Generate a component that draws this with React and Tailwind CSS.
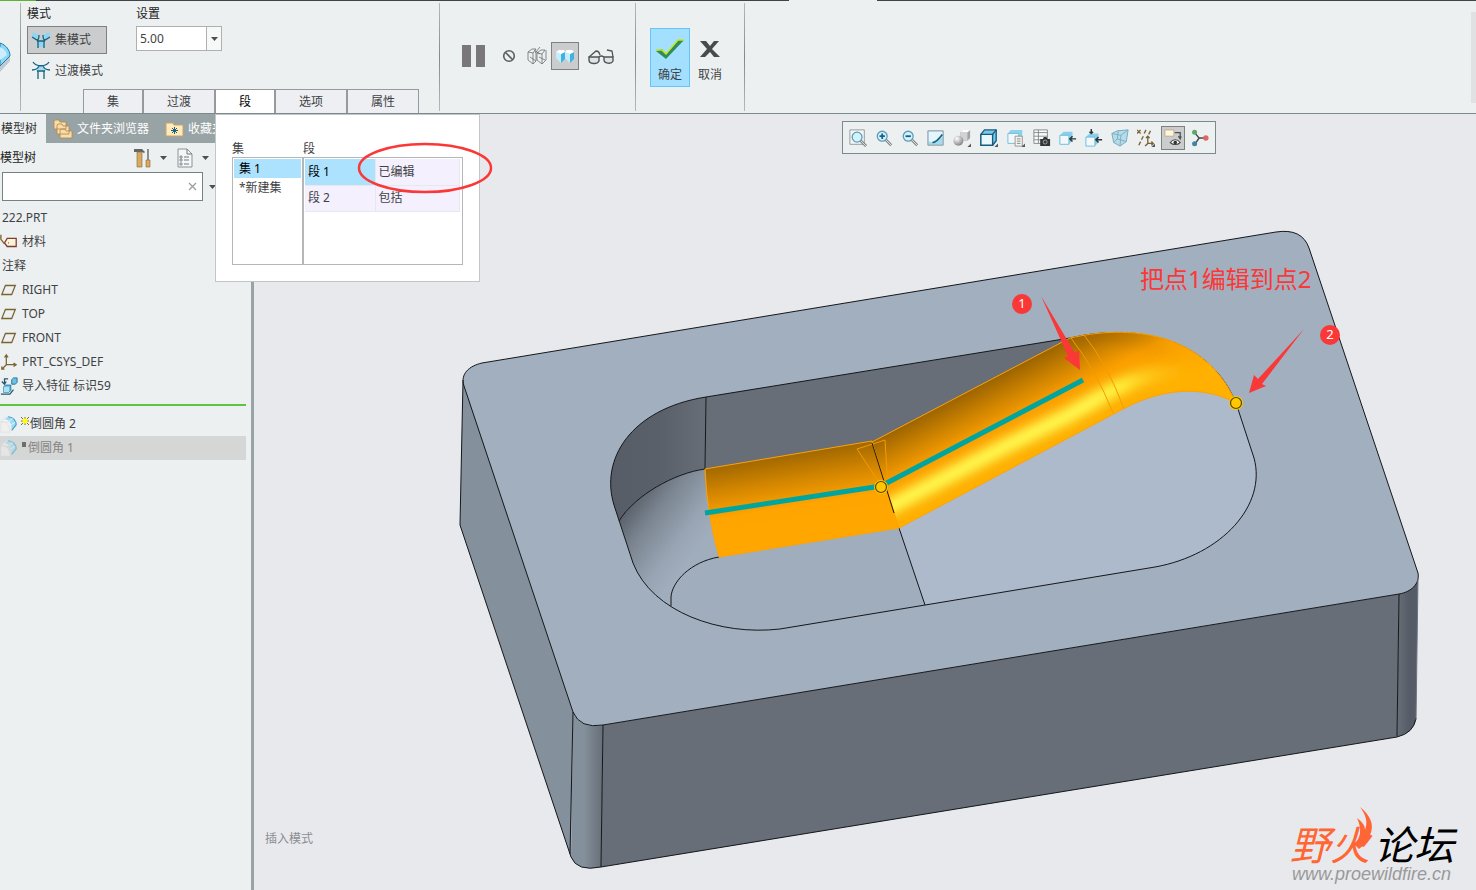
import React from "react";

const Icon = ({ children, size = 20, className = "" }) => (
  <svg width={size} height={size} viewBox="0 0 20 20" fill="none" className={`shrink-0 ${className}`} aria-hidden="true">
    {children}
  </svg>
);

const Caret = () => (
  <svg width="7" height="4" viewBox="0 0 7 4" className="shrink-0" aria-hidden="true">
    <path d="M0 0h7L3.5 4z" fill="#4d5050" />
  </svg>
);

const Divider = () => (
  <div className="my-0.5 w-px shrink-0 bg-gradient-to-b from-[#b4b9ba] via-[#85898b] to-[#b4b9ba]"></div>
);

const SetModeIcon = () => (
  <Icon>
    <path d="M2 2l6 3-1 5-6-3z M18 2l-6 3 1 5 6-3z M7 11h6v6H7z" fill="#8fd6f3" />
    <path d="M1 7l5 3c2 0 2-3 2-5M19 7l-5 3c-2 0-2-3-2-5M6 11h8M7 11v7M13 11v7" stroke="#17617f" strokeWidth="1.3" />
  </Icon>
);

const TransitionIcon = () => (
  <Icon>
    <path d="M7 5h6l2 5H5z" fill="#a5dcf3" />
    <path d="M2 1c3 5 13 5 16 0M1 9c5 0 6-2 7-4M19 9c-5 0-6-2-7-4M6 10h8M7 10v8M13 10v8" stroke="#17617f" strokeWidth="1.3" />
  </Icon>
);

const tabs = [
  { label: "集", width: "w-[60px]" },
  { label: "过渡", width: "w-[72px]" },
  { label: "段", width: "w-[60px]", active: true },
  { label: "选项", width: "w-[72px]" },
  { label: "属性", width: "w-[72px]" },
];

const SegmentPanel = () => (
  <div className="absolute left-[132px] top-full mt-px h-[168px] w-[265px] border border-[#c2c6c9] bg-white pl-4 pt-6">
    <div className="flex h-[18px] items-end leading-4">
      <span className="w-[71px]">集</span>
      <span>段</span>
    </div>
    <div className="flex h-[108px] w-[231px] border border-[#b4b6b8]">
      <ul className="w-[71px] border-r-2 border-[#b4b6b8] p-px">
        <li className="flex h-[19px] items-center bg-[#ade2ff] pl-[5px] text-black">集 1</li>
        <li className="flex h-[19px] items-center pl-[5px]">*新建集</li>
      </ul>
      <div className="p-px">
        <table className="w-[155px] border-collapse bg-[#f4f0fe]">
          <tbody>
            <tr className="h-[26px] border-b border-[#e6e8ee]">
              <td className="w-[70px] bg-[#ade2ff] pl-[3px] text-black">段 1</td>
              <td className="border-x border-[#e6e8ee] pl-[3px]">已编辑</td>
            </tr>
            <tr className="h-[26px] border-b border-[#e6e8ee]">
              <td className="pl-[3px]">段 2</td>
              <td className="border-x border-[#e6e8ee] pl-[3px]">包括</td>
            </tr>
          </tbody>
        </table>
      </div>
    </div>
    {/* hand drawn mark around the edited cell */}
    <svg className="pointer-events-none absolute left-[140px] top-[26px]" width="138" height="54" viewBox="0 0 138 54" fill="none">
      <ellipse cx="69" cy="27" rx="66" ry="24" stroke="#fb3838" strokeWidth="2.5" />
    </svg>
  </div>
);

const Ribbon = () => (
  <header className="relative z-10 border-b border-[#7b8b8b] bg-[#ecf0f1]">
    <div className="flex h-px">
      <div className="w-9 bg-[#5cb336]"></div>
      <div className="w-[753px] bg-[#3c4548]"></div>
      <div className="w-[88px]"></div>
      <div className="flex-1 bg-[#3c4548]"></div>
    </div>
    <div className="flex h-28">
      <div className="w-5 shrink-0 pt-10">
        <svg width="12" height="34" viewBox="0 0 12 34">
          <path d="M0 24l10-10v6L0 31z" fill="#c2c6cf" />
          <path d="M0 2c6 2 10 7 10 13L0 25z" fill="#8dd6f5" stroke="#1b84ad" />
          <path d="M0 6c4 2 6 4 7 8l-7 5z" fill="#cceefb" />
        </svg>
      </div>
      <Divider />
      <div className="flex w-[418px] shrink-0 flex-col justify-between">
        <div className="flex pl-1.5 pt-1">
          <div className="flex w-[109px] flex-col items-start">
            <span className="mb-[3px] h-[18px] leading-[18px] text-[#222]">模式</span>
            <button className="flex h-7 w-20 items-center gap-1 border border-[#7f8080] bg-[#cbccce] pl-[3px]">
              <SetModeIcon />
              集模式
            </button>
            <button className="mt-1 flex h-[26px] items-center gap-1 pl-1">
              <TransitionIcon />
              过渡模式
            </button>
          </div>
          <div>
            <label htmlFor="radius" className="mb-[3px] block h-[18px] leading-[18px] text-[#222]">设置</label>
            <div className="flex h-[25px] w-[86px] border border-[#aeb1b2] bg-white">
              <input id="radius" defaultValue="5.00" className="w-[70px] border-r border-[#aeb1b2] pl-[3px] outline-none" />
              <button aria-label="半径列表" className="flex flex-1 items-center justify-center bg-[#f7f8f8]">
                <Caret />
              </button>
            </div>
          </div>
        </div>
        <nav className="relative flex h-6 pl-[62px]">
          {tabs.map((tab) => (
            <button
              key={tab.label}
              className={`border border-b-0 border-[#979a9c] text-center ${tab.width} ${tab.active ? "bg-white text-black" : "bg-[#eeeff2]"}`}
            >
              {tab.label}
            </button>
          ))}
          <div className="absolute left-[62px] top-0">
            <div className="relative h-6">
              <SegmentPanel />
            </div>
          </div>
        </nav>
      </div>
      <Divider />
      <div className="flex h-[110px] w-[195px] shrink-0 items-center pl-[22px]">
        <button aria-label="暂停" className="flex w-[23px] justify-between">
          <span className="h-[22px] w-[9px] bg-[#797779]"></span>
          <span className="h-[22px] w-[9px] bg-[#797779]"></span>
        </button>
        <button aria-label="无预览" className="ml-3.5">
          <Icon>
            <circle cx="10" cy="10" r="5.3" stroke="#5c5e60" strokeWidth="1.6" />
            <path d="M6.5 6.5l7 7" stroke="#5c5e60" strokeWidth="1.6" />
          </Icon>
        </button>
        <button aria-label="分离预览" className="ml-2">
          <Icon>
            <path d="M1 6l4-3h4l-3 4zM1 6v8l5 4V7M6 18l3-3V5M9 15l-6-4M10 7l4-3h4l-3 4zM10 7v7l5 4V8M15 18l4-4V4M18 14l-6-3M7 4l6 4M13 1l-5 6" stroke="#6c7072" strokeWidth=".8" />
          </Icon>
        </button>
        <button aria-label="附加预览" className="ml-1 flex size-7 items-center justify-center border border-[#7f8080] bg-[#cbccce]">
          <Icon>
            <path d="M1 6l5 2v9l-5-5zM10 6l5 2v9l-5-5z" fill="#c5edfb" />
            <path d="M6 8l4-2v7l-4 4zM15 8l4-2v7l-4 4z" fill="#3fb1e4" />
            <path d="M1 6l3-2h5l1 2-4 2zM10 6l2-2h5l2 2-4 2z" fill="#fff" />
          </Icon>
        </button>
        <button aria-label="校验" className="ml-2">
          <svg width="28" height="20" viewBox="0 0 28 20" fill="none">
            <path d="M2 11h10v4c-2 4-10 3-10-1zM17 11h9v4c-2 4-9 2-9-1z" fill="#dde3e6" stroke="#505456" strokeWidth="1.4" />
            <path d="M2 11l7-6q3 0 4 4M12 11q2-2 5 0M26 11l-1-6-5-1" stroke="#505456" strokeWidth="1.3" />
          </svg>
        </button>
      </div>
      <Divider />
      <div className="flex w-[108px] shrink-0 items-center pl-3.5">
        <button className="flex h-[59px] w-10 flex-col items-center border border-[#65c5f8] bg-[#a3dfff] pt-[7px]">
          <svg width="30" height="26" viewBox="0 0 30 26">
            <path d="M1 15l6-2 4 5L23 4l6 0-18 19z" fill="#2f8d5b" />
            <path d="M1 14h6l4 4L23 4h6" fill="none" stroke="#c8e718" strokeWidth="1.5" />
          </svg>
          <span className="mt-1.5 leading-[14px]">确定</span>
        </button>
        <button className="flex h-[59px] w-10 flex-col items-center pt-2">
          <svg width="22" height="26" viewBox="0 0 22 26">
            <path d="M1 5h6l4 5 4-5h5l-7 8 8 8h-6l-4-5-5 5H1l7-8z" fill="#494a4c" />
          </svg>
          <span className="mt-1.5 leading-[14px]">取消</span>
        </button>
      </div>
      <Divider />
      <div className="ml-auto mb-2.5 mt-[11px] w-[5px] bg-[#e0e1e3]"></div>
    </div>
  </header>
);

const PlaneIcon = () => (
  <Icon size={18}>
    <path d="M6 5h11l-4 10H2z" stroke="#7c6332" strokeWidth="1.4" />
  </Icon>
);

const RoundIcon = ({ dim }) => (
  <Icon size={18} className={dim ? "opacity-60" : ""}>
    <path d="M1 7l6-5 6 2-5 4z" fill="#f4f4f4" stroke="#d5d5d5" strokeWidth=".6" />
    <path d="M1 8c6-1 10 3 10 11H1z" fill="#f2f0ef" stroke="#dadada" strokeWidth=".6" />
    <path d="M5 5c6 0 8 5 8 12l5-5C18 7 14 2 9 2z" fill="#9fdaf2" />
    <path d="M9 2c5 0 9 4 9 9l-5 6" stroke="#3d9fc6" strokeWidth="1.2" />
    <path d="M10 7l4-3M12 11l5-3" stroke="#e5f8ff" />
  </Icon>
);

const tree = [
  { label: "222.PRT" },
  {
    label: "材料",
    icon: (
      <Icon size={18}>
        <path d="M8 6h10v9H8l-3-4z" fill="#fff3d5" stroke="#7e3a35" strokeWidth="1.4" />
        <path d="M1 2v5l4 5M9 11h1" stroke="#806128" strokeWidth="1.5" />
      </Icon>
    ),
  },
  { label: "注释" },
  { label: "RIGHT", icon: <PlaneIcon /> },
  { label: "TOP", icon: <PlaneIcon /> },
  { label: "FRONT", icon: <PlaneIcon /> },
  {
    label: "PRT_CSYS_DEF",
    icon: (
      <Icon size={18}>
        <path d="M7 2v11h11M7 13l-5 5M5 5l2-3 2 3M15 11l3 2-3 2M2 15v3h3" stroke="#7c6332" strokeWidth="1.4" />
      </Icon>
    ),
  },
  {
    label: "导入特征 标识59",
    icon: (
      <Icon size={18}>
        <path d="M13 3l2-2h4v5l-2 2h-4zM4 11l2-2h6v6l-2 2H4z" fill="#6cc2e3" stroke="#1d7095" />
        <path d="M4 11h6v6H4z" fill="#a9e2f6" />
        <path d="M1 19h10l4-5M9 2H5v5M2 5l3 3 2-3" stroke="#27566c" strokeWidth="1.4" />
      </Icon>
    ),
  },
];

const Sidebar = () => (
  <aside className="w-[254px] shrink-0 border-r-[3px] border-[#98a3a5] bg-[#ecf0f1]">
    <div className="flex h-[29px] overflow-hidden whitespace-nowrap bg-[#98a3a5] text-white">
      <button className="w-[46px] bg-[#ecf0f1] pl-px text-left text-[#333]">模型树</button>
      <button className="flex w-[114px] items-center gap-1 pl-[7px]">
        <Icon>
          <path d="M1 2l1-1h4l1 2h6v7H1zM4 6l1-1h4l1 2h6v8H4zM7 11l1-1h4l1 2h6v7H7z" fill="#f8ddaa" stroke="#b38746" strokeWidth=".8" />
        </Icon>
        文件夹浏览器
      </button>
      <button className="flex items-center gap-1 pl-1">
        <Icon>
          <path d="M2 4h7l1 2h9v11H2z" fill="#ffe9bd" stroke="#c8a464" />
          <path d="M10.5 8v7M7 11.5h7M8 9l5 5M13 9l-5 5" stroke="#1a5f7d" />
        </Icon>
        收藏夹
      </button>
    </div>
    <div className="flex h-[29px] items-center">
      <span className="w-[132px] text-[#222]">模型树</span>
      <button aria-label="设置" className="flex items-center gap-2">
        <Icon>
          <path d="M2 1h8l3 3-1 1-2-1H2z" fill="#62666b" />
          <path d="M5 4h5v15H5z" fill="#d7a961" stroke="#8b6837" strokeWidth=".6" />
          <path d="M14 12h4v7h-4z" fill="#d7a961" stroke="#8b6837" strokeWidth=".6" />
          <path d="M16 1v11" stroke="#73777c" strokeWidth="1.6" />
        </Icon>
        <Caret />
      </button>
      <button aria-label="显示" className="ml-2 flex items-center gap-[7px]">
        <Icon>
          <path d="M3 1h9l5 5v13H3z" fill="#f4f6f7" stroke="#8c9296" />
          <path d="M12 1v5h5M9 9h5M9 12h5M9 16h5" stroke="#72787b" />
          <path d="M5 8h2v2H5zM5 11h2v2H5zM5 15h2v2H5z" stroke="#72787b" strokeWidth=".8" />
        </Icon>
        <Caret />
      </button>
    </div>
    <div className="flex items-center gap-1.5 pl-0.5">
      <div className="flex h-[29px] w-[201px] items-center border border-[#748284] bg-white pr-1">
        <input aria-label="搜索" className="min-w-0 flex-1 px-1 outline-none" />
        <button aria-label="清除">
          <svg width="9" height="9" viewBox="0 0 9 9" className="mr-px">
            <path d="M1 1l7 7M8 1L1 8" stroke="#999d9e" strokeWidth="1.3" />
          </svg>
        </button>
      </div>
      <Caret />
    </div>
    <ul className="pt-[5px]">
      {tree.map((item) => (
        <li key={item.label} className={`flex h-6 items-center gap-1 ${item.icon ? "" : "pl-0.5"}`}>
          {item.icon}
          {item.label}
        </li>
      ))}
    </ul>
    <div className="mt-1.5 mr-[5px] h-0.5 bg-[#5fc240]"></div>
    <ul className="mr-[5px] pt-1.5">
      <li className="flex h-6 items-center">
        <RoundIcon />
        <svg width="8" height="8" viewBox="0 0 8 8" className="mb-1.5 ml-[3px] mr-px">
          <path d="M0 0l8 8M8 0L0 8M4 0v8M0 4h8" stroke="#77702a" />
          <path d="M2 2h4v4H2z" fill="#ff0" />
          <path d="M4 1v6M1 4h6" stroke="#ff0" />
        </svg>
        倒圆角 2
      </li>
      <li className="flex h-6 items-center bg-[#d5d6d6] text-[#858686]">
        <RoundIcon dim />
        <span className="mb-2 ml-1 mr-0.5 h-[5px] w-1 bg-[#6d6e6e]"></span>
        倒圆角 1
      </li>
    </ul>
  </aside>
);

const Lens = () => (
  <g>
    <path d="M12 12l6 6" stroke="#858a8e" strokeWidth="3" />
    <path d="M12 12l6 6" stroke="#e1e3e4" strokeWidth="1" />
    <circle cx="8" cy="8" r="5.5" fill="#d5f1fb" stroke="#5b9cb6" strokeWidth="1.4" />
  </g>
);

const Corner = () => <path d="M20 16v4h-4z" fill="#55595b" />;

const viewTools = [
  {
    name: "重新调整",
    icon: (
      <>
        <path d="M1 1h16v16H1z" fill="#f5f7f8" stroke="#8d9496" />
        <g transform="translate(1 1)"><Lens /></g>
      </>
    ),
  },
  { name: "放大", icon: <><Lens /><path d="M5 8h6M8 5v6" stroke="#14628a" strokeWidth="2" /></> },
  { name: "缩小", icon: <><Lens /><path d="M5 8h6" stroke="#14628a" strokeWidth="2" /></> },
  {
    name: "重画",
    icon: (
      <>
        <path d="M1 2h17v16H1z" fill="#a4daee" stroke="#899397" />
        <path d="M2 3h15v6L7 15l-5-1z" fill="#e4f6fc" />
        <path d="M6 15c4 0 8-5 11-9" stroke="#185d7c" strokeWidth="1.8" />
      </>
    ),
  },
  {
    name: "渲染选项",
    icon: (
      <>
        <path d="M8 4l3-3h8v9l-3 3H8z" fill="#a3a3a4" />
        <path d="M8 4l3-3h8l-3 3z" fill="#fff" />
        <path d="M8 4h8v9H8z" fill="#d3d3d4" />
        <circle cx="6" cy="13" r="5.5" fill="url(#ball)" />
        <Corner />
      </>
    ),
  },
  {
    name: "显示样式",
    wide: true,
    icon: (
      <>
        <path d="M1 6l4-5h13v12l-4 5H1z" fill="#7cc8e4" stroke="#155d80" strokeWidth="1.5" />
        <path d="M1 6h13v12H1z" fill="#eaf8fd" stroke="#155d80" strokeWidth="1.5" />
        <path d="M14 6l4-5" stroke="#155d80" strokeWidth="1.5" />
        <Corner />
      </>
    ),
  },
  {
    name: "已保存方向",
    wide: true,
    icon: (
      <>
        <path d="M1 5l3-4h13v10l-3 5H1z" fill="#8dd2ed" />
        <path d="M1 5h12v11H1z" fill="#f3f7f9" stroke="#75bdd9" />
        <path d="M9 8h8v11H9z" fill="#f6f4ee" stroke="#8f938f" />
        <path d="M11 11h4M11 13.5h4M11 16h4" stroke="#7e827e" />
        <Corner />
      </>
    ),
  },
  {
    name: "视图管理器",
    icon: (
      <>
        <path d="M1 1h15v15H1z" fill="#fbfbfb" stroke="#7f8486" />
        <path d="M1 4h15M1 8h15M1 12h15M6 1v15" stroke="#7f8486" />
        <path d="M8 11h3l1-2h3l1 2h3v8H8z" fill="#333638" />
        <circle cx="13.5" cy="14.5" r="2.2" stroke="#a6abad" />
      </>
    ),
  },
  {
    name: "透视图",
    icon: (
      <>
        <path d="M1 7l4-4h10v10l-4 4H1z" fill="#8bd0eb" />
        <path d="M1 7h10v10H1z" fill="#f3f8fa" stroke="#62bde0" />
        <path d="M12 11h7M15 8l-3 3 3 3" stroke="#303436" strokeWidth="1.6" />
      </>
    ),
  },
  {
    name: "参考",
    icon: (
      <>
        <path d="M1 9l4-4h10v10l-4 4H1z" fill="#8bd0eb" />
        <path d="M1 9h10v10H1z" fill="#f3f8fa" stroke="#62bde0" />
        <path d="M7 0v5M5 3l2 2 2-2M12 12h7M15 9l-3 3 3 3" stroke="#303436" strokeWidth="1.6" />
      </>
    ),
  },
  {
    name: "剖面",
    icon: (
      <>
        <path d="M1 5l6-3 12-1-2 13-7 5-7-4z" fill="#b5dcea" stroke="#6ca7bd" />
        <path d="M1 5l10 2 8-6M11 7l-1 12M8 2l-1 9-4 4M7 11l10 3" stroke="#7faabd" />
      </>
    ),
  },
  {
    name: "基准显示",
    icon: (
      <>
        <path d="M0 1l4 4M4 1L0 5M10 1L8 5M7 8l-2 4M4 14l-2 4M15 2l-2 4M12 8v8h6M12 16l-3 3M10 10l2-2 2 2M16 14l2 2-2 2" stroke="#7c6332" strokeWidth="1.5" />
        <Corner />
      </>
    ),
  },
  {
    name: "注释显示",
    active: true,
    icon: (
      <>
        <path d="M1 1h10v7H1z" fill="#fff5da" stroke="#b9ab88" />
        <path d="M12 4h6v6M16 8l2 3 1-3" stroke="#4d5052" strokeWidth="1.4" />
        <path d="M7 15c3-4 8-4 11 0-3 3-8 3-11 0z" fill="#fff" stroke="#444" strokeWidth="1.2" />
        <circle cx="12.5" cy="15" r="2" fill="#333" />
      </>
    ),
  },
  {
    name: "旋转中心",
    icon: (
      <>
        <path d="M4 4l5 6-4 6M9 10h7" stroke="#424a4c" strokeWidth="1.6" />
        <circle cx="4" cy="3.5" r="2.8" fill="#5caa64" />
        <circle cx="4" cy="16.5" r="2.8" fill="#4383a4" />
        <circle cx="16.5" cy="10" r="3" fill="#dc6863" />
      </>
    ),
  },
];

const toolWidth = (tool) => {
  if (tool.active) return "mx-0.5 w-6 border border-[#7f8080] bg-[#cbccce]";
  return tool.wide ? "w-[27px]" : "w-[26px]";
};

const ViewToolbar = () => (
  <div className="absolute left-[588px] top-[7px] flex h-[33px] items-center border border-[#7b8b8b] bg-[#ecf0f1] px-0.5">
    {viewTools.map((tool) => (
      <button key={tool.name} aria-label={tool.name} className={`flex h-6 items-center justify-center ${toolWidth(tool)}`}>
        <Icon size={18}>{tool.icon}</Icon>
      </button>
    ))}
  </div>
);

const topFace = "M482 363L1276 232Q1302 228 1309 248L1418 573C1420 584 1411 592 1399 594L603 725Q580 729 573 712L464 386C460 374 469 366 482 363Z";
const pocket = "M706 397L1070 338C1140 322 1210 340 1236 403L1254 458C1267 505 1222 555 1155 567L780 629C720 636 652 612 633 563L614 505C600 460 630 409 706 397Z";
const sweep = "M872 442L1070 338C1140 322 1208 338 1236 403C1205 386 1164 387 1123 409L899 528Z";

const Model = () => (
  <svg viewBox="254 114 1222 776" className="block h-auto w-full" fill="none" role="img" aria-label="222.PRT">
    <defs>
      <radialGradient id="ball" cx=".35" cy=".3" r=".7">
        <stop offset="0" stopColor="#fff" />
        <stop offset="1" stopColor="#888" />
      </radialGradient>
      <linearGradient id="frontCorner">
        <stop offset="0" stopColor="#84909b" />
        <stop offset=".4" stopColor="#84909b" />
        <stop offset="1" stopColor="#676e77" />
      </linearGradient>
      <linearGradient id="rightCorner">
        <stop offset="0" stopColor="#676e77" />
        <stop offset=".6" stopColor="#555c67" />
        <stop offset="1" stopColor="#555c67" />
      </linearGradient>
      <linearGradient id="wall">
        <stop offset="0" stopColor="#565c66" />
        <stop offset=".6" stopColor="#5a606a" />
        <stop offset="1" stopColor="#676e77" />
      </linearGradient>
      <linearGradient id="fillet" gradientUnits="userSpaceOnUse" x1="622" y1="510" x2="690" y2="560">
        <stop offset="0" stopColor="#565d67" />
        <stop offset=".35" stopColor="#7c8692" />
        <stop offset=".75" stopColor="#98a4b3" />
        <stop offset="1" stopColor="#a0adbd" />
      </linearGradient>
      <linearGradient id="band" gradientUnits="userSpaceOnUse" x1="788" y1="455" x2="800" y2="528">
        <stop offset="0" stopColor="#a26800" />
        <stop offset=".35" stopColor="#d48600" />
        <stop offset=".7" stopColor="#ffa400" />
        <stop offset="1" stopColor="#ffa700" />
      </linearGradient>
      <linearGradient id="sweepFill" gradientUnits="userSpaceOnUse" x1="971" y1="390" x2="1012" y2="469">
        <stop offset="0" stopColor="#9c6400" />
        <stop offset=".25" stopColor="#cc8200" />
        <stop offset=".5" stopColor="#fa9e00" />
        <stop offset="1" stopColor="#ffb000" />
      </linearGradient>
      <linearGradient id="shine" gradientUnits="userSpaceOnUse" x1="1090" y1="400" x2="1200" y2="360">
        <stop offset="0" stopColor="#ffff55" />
        <stop offset=".3" stopColor="#fff640" />
        <stop offset="1" stopColor="#ffb000" stopOpacity="0" />
      </linearGradient>
      <linearGradient id="shade" gradientUnits="userSpaceOnUse" x1="1070" y1="340" x2="1175" y2="340">
        <stop offset="0" stopColor="#a26800" stopOpacity=".7" />
        <stop offset="1" stopColor="#a26800" stopOpacity="0" />
      </linearGradient>
      <clipPath id="pocketClip"><path d={pocket} /></clipPath>
      <clipPath id="sweepClip"><path d={sweep} /></clipPath>
      <filter id="soft" filterUnits="userSpaceOnUse" x="800" y="280" width="500" height="300">
        <feGaussianBlur stdDeviation="6" />
      </filter>
    </defs>
    <rect x="254" y="114" width="1222" height="776" fill="#e8e9ed" />

    {/* block sides */}
    <path d="M463 380L460 525L571 857L573 712Z" fill="#84909b" />
    <path d="M603 725L1399 594L1397 737L601 867Z" fill="#676e77" />
    <path d="M573 712Q580 729 603 725L601 867Q577 872 571 857Z" fill="url(#frontCorner)" />
    <path d="M1399 594Q1416 590 1418 577L1416 720Q1413 733 1397 737Z" fill="url(#rightCorner)" />
    <path d={topFace} fill="#a2afbf" />

    {/* pocket */}
    <g clipPath="url(#pocketClip)">
      <path d={pocket} fill="#a0adbd" />
      <path d="M706 397L1080 330V400L872 520L705 480Z" fill="#676e77" />
      <path d="M706 397L705 469C675 473 635 495 619 521L590 500V380Z" fill="url(#wall)" />
      <path d="M705 469C675 473 635 495 619 521L600 530L640 620H671V597C671 582 690 562 719 557Z" fill="url(#fillet)" />
      <path d="M899 528L1100 380L1240 340L1290 450V640H930L925 605Z" fill="#adbacc" />
    </g>

    <g stroke="#14171a" strokeWidth="1">
      <path d={topFace} />
      <path d={pocket} />
      <path d="M463 380L460 525L571 857Q577 872 601 867L1397 737Q1414 733 1416 718" />
      <path d="M573 712L570 854M603 725L601 867M1399 594L1397 736" />
      <path d="M706 397L705 469C675 473 635 495 619 521M671 606V597C672 582 690 562 719 557M899 528L925 605" />
    </g>
    <path d="M1418 577L1416 720" stroke="#6e747e" />

    {/* rounded edge preview */}
    <path d="M705 469L872 441L899 528L719 557Q707 515 705 469Z" fill="url(#band)" stroke="#ffa200" />
    <path d={sweep} fill="url(#sweepFill)" />
    <g clipPath="url(#sweepClip)">
      <path d="M1070 334C1095 326 1130 328 1180 350" stroke="url(#shade)" strokeWidth="24" filter="url(#soft)" />
      <path d="M880 512L1000 449L1067 416L1117 388Q1150 372 1190 370" stroke="url(#shine)" strokeWidth="15" filter="url(#soft)" />
    </g>
    <path d={sweep} stroke="#ffa200" />
    <path d="M857 449L885 440L888 487M857 449L880 484M1071 338Q1096 370 1113 413M1084 335Q1108 365 1124 409" stroke="#f59b00" />
    <path d="M872 443L894 513" stroke="#221a08" />
    <path d="M705 513L881 486L1083 380" stroke="#00a5a0" strokeWidth="5" />
    {[[881, 487], [1236, 403]].map(([x, y]) => (
      <g key={x}>
        <circle cx={x} cy={y} r="7" fill="#ffc800" />
        <circle cx={x} cy={y} r="5.5" fill="#ffc800" stroke="#554606" strokeWidth="1.2" />
      </g>
    ))}

    {/* annotations */}
    <g fill="#fb3838">
      <path d="M1041 296L1075 353L1079 350L1080 370L1064 358L1068 356Z" />
      <path d="M1304 329L1262 384L1266 386L1249 393L1254 375L1258 379Z" />
      <circle cx="1022" cy="304" r="10" />
      <circle cx="1330" cy="335" r="10" />
      <text x="1140" y="288" fontSize="24">把点1编辑到点2</text>
    </g>
    <g fill="#fff" fontSize="13" textAnchor="middle">
      <text x="1022" y="308">1</text>
      <text x="1330" y="339">2</text>
    </g>
  </svg>
);

const Watermark = () => (
  <div className="absolute bottom-2 right-[18px] w-[168px] italic">
    <div className="whitespace-nowrap text-[40px] leading-[42px] text-black">
      <span className="text-[#ff6633]">野火</span>
      <span className="ml-1">论坛</span>
    </div>
    <svg className="absolute left-[64px] top-[-18px]" width="26" height="46" viewBox="0 0 26 46">
      <path d="M6 1C16 9 21 19 16 29C13 36 10 39 5 43L0 38C7 32 8 23 3 12C8 16 11 19 11 24C14 16 12 9 6 1Z" fill="#ff6633" />
    </svg>
    <a href="http://www.proewildfire.cn" className="block pl-0.5 font-['Liberation_Sans',sans-serif] text-[18px] leading-4 text-[#999]">
      www.proewildfire.cn
    </a>
  </div>
);

const App = () => {
  return (
    <div className="flex min-h-screen flex-col overflow-x-hidden bg-[#e8e9ed] font-['Noto_Sans','Noto_Sans_CJK_SC',sans-serif] text-xs text-[#3f4244]">
      <Ribbon />
      <div className="flex flex-1">
        <Sidebar />
        <main className="relative min-w-0 flex-1">
          <Model />
          <ViewToolbar />
          <p className="absolute bottom-[43px] left-[11px] text-[#8b8d90]">插入模式</p>
          <Watermark />
        </main>
      </div>
    </div>
  );
};

export default App;
